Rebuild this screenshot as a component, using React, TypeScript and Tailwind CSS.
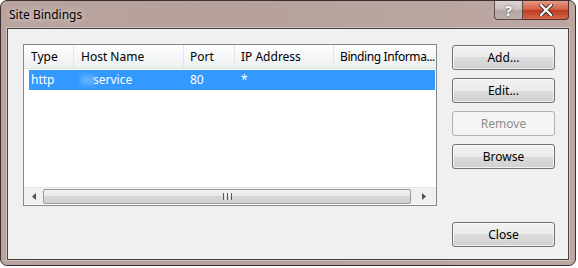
import React from "react";

const font = { fontFamily: '"Noto Sans", "Open Sans", sans-serif' };

function Btn({ label, disabled }: { label: string; disabled?: boolean }) {
  if (disabled) {
    return (
      <div className="w-[103px] h-[25px] rounded-[3px] border border-[#adb2b5] bg-[#f4f4f4] flex items-center justify-center text-[12px] text-[#8d8d8d]">
        {label}
      </div>
    );
  }
  return (
    <div className="w-[103px] h-[25px] rounded-[3px] border border-[#707070] bg-[linear-gradient(to_bottom,#f2f2f2_0%,#ebebeb_50%,#dddddd_50%,#cfcfcf_100%)] shadow-[inset_0_0_0_1px_rgba(255,255,255,0.7)] flex items-center justify-center text-[12px] text-black">
      {label}
    </div>
  );
}

export default function App() {
  return (
    <div className="w-[578px] h-[268px] bg-white" style={font}>
      <div className="w-[576px] h-[266px] rounded-[7px] border border-[#3a3030] bg-[linear-gradient(to_right,#b9a39e,#b5a09b_40%,#b9a5a0_70%,#bca6a1)] flex flex-col relative overflow-hidden">
        {/* title bar */}
        <div className="h-[27px] flex items-center pl-[8px] text-[12px] text-black [text-shadow:0_0_6px_rgba(255,255,255,0.9)]">
          Site Bindings
        </div>
        <div className="absolute top-0 right-[6px] flex z-10">
          <div className="w-[29px] h-[19px] rounded-bl-[4px] border border-[#5a4a48] border-t-0 bg-[linear-gradient(to_bottom,#ddd3d0,#c9bdb9_50%,#b4a7a3_50%,#bdb0ac)] flex items-center justify-center text-white text-[14px] font-bold [text-shadow:0_0_2px_#333]">
            ?
          </div>
          <div className="w-[46px] h-[19px] rounded-br-[4px] border border-[#5a3028] border-t-0 border-l-0 bg-[#c8452b] bg-[linear-gradient(to_bottom,#e59a86,#d15a40_50%,#c03a20_50%,#d4664b)] flex items-center justify-center">
            <svg width="14" height="12" viewBox="0 0 14 12">
              <path d="M2 1 L12 11 M12 1 L2 11" stroke="#3a2a28" strokeWidth="4" strokeLinecap="square" />
              <path d="M2 1 L12 11 M12 1 L2 11" stroke="#ffffff" strokeWidth="2.2" strokeLinecap="square" />
            </svg>
          </div>
        </div>
        {/* client */}
        <div className="mx-[6px] mb-[5px] flex-1 border border-[#4a4040] shadow-[0_0_0_1px_rgba(255,255,255,0.35)] bg-[#f0f0f0] flex pl-[15px] pt-[15px] pr-[15px] pb-[12px] gap-[15px] text-[12px] text-black">
          <div className="flex flex-col">
            <div className="w-[414px] h-[162px] border border-[#828790] bg-white flex flex-col">
              <div className="h-[24px] flex bg-[linear-gradient(to_bottom,#ffffff,#f5f6f7_50%,#eef0f2)] border-b border-[#e0e3e6] items-center">
                <div className="w-[50px] h-full pl-[7px] flex items-center border-r border-[#e3e5e8]">Type</div>
                <div className="w-[110px] h-full pl-[7px] flex items-center border-r border-[#e3e5e8]">Host Name</div>
                <div className="w-[51px] h-full pl-[6px] flex items-center border-r border-[#e3e5e8]">Port</div>
                <div className="w-[99px] h-full pl-[6px] flex items-center border-r border-[#e3e5e8]">IP Address</div>
                <div className="flex-1 min-w-0 h-full pl-[6px] flex items-center whitespace-nowrap tracking-[-0.4px]">Binding Informa...</div>
              </div>
              <div className="h-[20px] mt-[1px] ml-[5px] mr-[1px] bg-[#3399ff] text-white flex items-center">
                <div className="w-[45px] pl-[2px]">http</div>
                <div className="w-[110px] pl-[7px] flex items-center">
                  <span className="inline-block w-[14px] h-[10px] bg-[#7fbfff] blur-[2px] opacity-60 mr-[-2px]" />
                  <span>service</span>
                </div>
                <div className="w-[51px] pl-[6px]">80</div>
                <div className="w-[99px] pl-[6px]">*</div>
              </div>
              <div className="flex-1" />
              <div className="h-[17px] mb-[1px] flex items-center bg-[#f0f0f0] border-t border-[#e6e6e6]">
                <div className="w-[19px] h-full flex items-center justify-center">
                  <svg width="4" height="7" viewBox="0 0 4 7"><path d="M4 0 L0 3.5 L4 7 Z" fill="#505050" /></svg>
                </div>
                <div className="flex-1 h-[15px] rounded-[2px] border border-[#9a9a9a] bg-[linear-gradient(to_bottom,#f2f2f2,#e8e8e8_50%,#d6d6d6_50%,#d0d0d0)] flex items-center justify-center">
                  <div className="flex gap-[1px]">
                    <div className="w-[1px] h-[7px] bg-[#5a5a5a]" />
                    <div className="w-[1px] h-[7px] bg-[#f8f8f8]" />
                    <div className="w-[1px] h-[7px] bg-[#5a5a5a]" />
                    <div className="w-[1px] h-[7px] bg-[#f8f8f8]" />
                    <div className="w-[1px] h-[7px] bg-[#5a5a5a]" />
                  </div>
                </div>
                <div className="w-[25px] h-full flex items-center justify-center">
                  <svg width="4" height="7" viewBox="0 0 4 7"><path d="M0 0 L4 3.5 L0 7 Z" fill="#505050" /></svg>
                </div>
              </div>
            </div>
          </div>
          <div className="flex flex-col pt-[1px]">
            <div className="flex flex-col gap-[8px]">
              <Btn label="Add..." />
              <Btn label="Edit..." />
              <Btn label="Remove" disabled />
              <Btn label="Browse" />
            </div>
            <div className="flex-1" />
            <Btn label="Close" />
          </div>
        </div>
      </div>
    </div>
  );
}
